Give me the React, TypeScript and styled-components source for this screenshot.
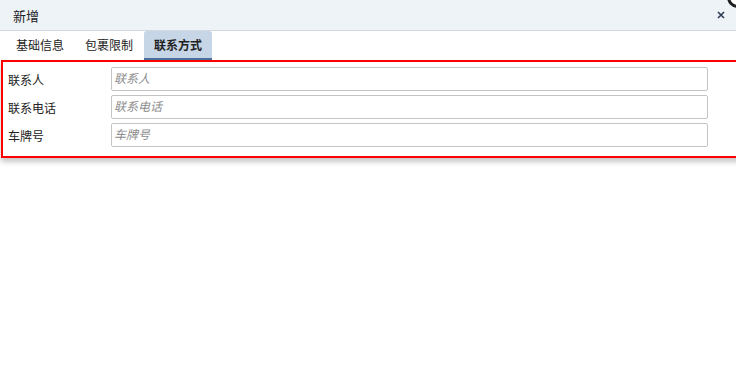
import React from "react";
import styled, { createGlobalStyle } from "styled-components";

const GlobalStyle = createGlobalStyle`
  html, body {
    margin: 0;
    padding: 0;
    background: #fff;
    font-family: "Liberation Sans", "Noto Sans CJK SC", sans-serif;
  }
`;

const Window = styled.div`
  position: relative;
  width: 736px;
  height: 389px;
  overflow: hidden;
  background: #fff;
`;

const TitleBar = styled.div`
  height: 31px;
  box-sizing: border-box;
  display: flex;
  align-items: center;
  justify-content: space-between;
  padding: 0 10px 0 13px;
  background: #eef3f8;
  border-bottom: 1px solid #d3d8de;
`;

const Title = styled.span`
  font-size: 13px;
  color: #222;
`;

const CloseButton = styled.span`
  display: flex;
  align-items: center;
  justify-content: center;
  width: 10px;
  height: 10px;
  cursor: pointer;
`;

const CornerRing = styled.span`
  position: absolute;
  right: -13px;
  top: -14px;
  width: 16px;
  height: 16px;
  border: 3px solid #1e1e1e;
  border-radius: 50%;
  background: #fff;
`;

const TabBar = styled.div`
  height: 29px;
  box-sizing: border-box;
  display: flex;
  align-items: stretch;
  gap: 1px;
  padding-left: 6px;
`;

const Tab = styled.div<{ $active?: boolean }>`
  display: flex;
  align-items: center;
  padding: 0 10px;
  font-size: 12px;
  color: #222;
  font-weight: ${(p) => (p.$active ? "bold" : "normal")};
  background: ${(p) => (p.$active ? "#c6d6e6" : "transparent")};
  border-bottom: 2px solid ${(p) => (p.$active ? "#4b6f9c" : "transparent")};
  border-radius: 3px 3px 0 0;
  cursor: pointer;
`;

const FormBox = styled.div`
  margin-left: 1px;
  width: 760px;
  box-sizing: border-box;
  border: 2px solid #ff0000;
  padding: 5px 0 9px 5px;
  display: flex;
  flex-direction: column;
  gap: 4px;
  box-shadow: 0 4px 5px rgba(0, 0, 0, 0.22);
`;

const Row = styled.div`
  display: flex;
  align-items: center;
  height: 24px;
`;

const Label = styled.label`
  width: 103px;
  font-size: 12px;
  color: #222;
`;

const Input = styled.input`
  width: 597px;
  height: 24px;
  box-sizing: border-box;
  margin: 0;
  padding: 0 2px;
  border: 1px solid #c4c4c4;
  border-radius: 2px;
  font-size: 12px;
  font-family: "Liberation Sans", "Noto Sans CJK SC", sans-serif;
  outline: none;
  &::placeholder {
    color: #8c8c8c;
    font-style: italic;
  }
`;

const fields = ["联系人", "联系电话", "车牌号"];

export default function App() {
  return (
    <Window>
      <GlobalStyle />
      <TitleBar>
        <Title>新增</Title>
        <CloseButton>
          <svg width="8" height="8" viewBox="0 0 8 8">
            <path d="M1 1L7 7M7 1L1 7" stroke="#2d3c52" strokeWidth="1.6" />
          </svg>
        </CloseButton>
      </TitleBar>
      <CornerRing />
      <TabBar>
        <Tab>基础信息</Tab>
        <Tab>包裹限制</Tab>
        <Tab $active>联系方式</Tab>
      </TabBar>
      <FormBox>
        {fields.map((f) => (
          <Row key={f}>
            <Label>{f}</Label>
            <Input placeholder={f} />
          </Row>
        ))}
      </FormBox>
    </Window>
  );
}
